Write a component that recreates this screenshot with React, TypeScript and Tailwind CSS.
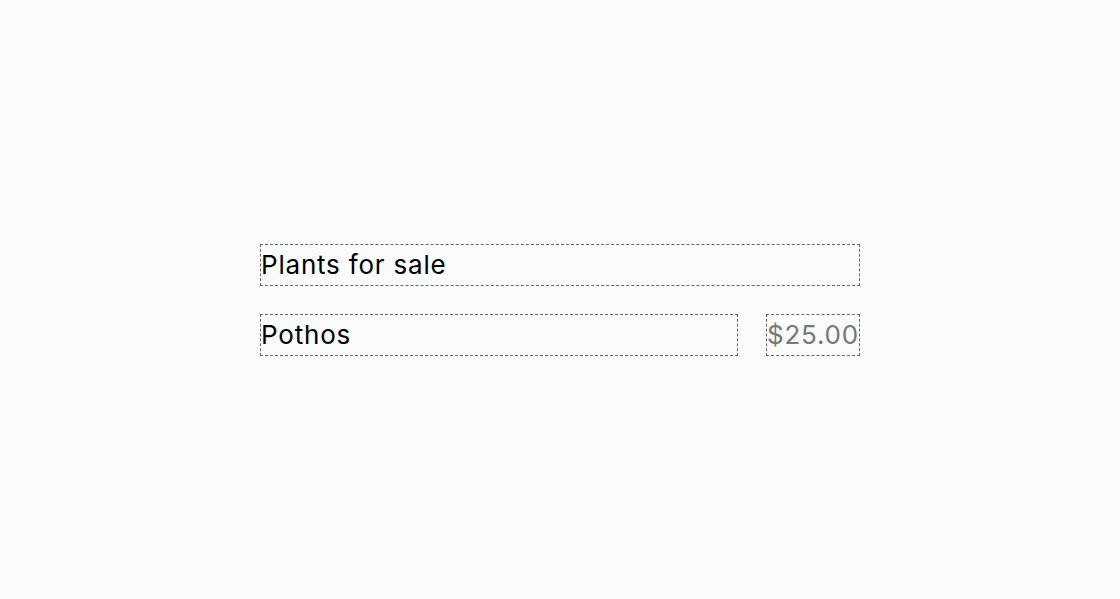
import React from 'react';

export default function App() {
  return (
    <div className="flex h-[599px] w-full items-center justify-center bg-[#f9fbfa] font-['Inter',sans-serif] tracking-[0.8px]">
      <div className="flex w-[600px] flex-col gap-[28px]">
        <div className="border border-dashed border-[#666] text-[26px] leading-[40px] text-black">
          Plants for sale
        </div>
        <div className="flex gap-[28px]">
          <div className="flex-1 border border-dashed border-[#666] text-[26px] leading-[40px] text-black">
            Pothos
          </div>
          <div className="border border-dashed border-[#666] text-[26px] leading-[40px] text-[#777]">
            $25.00
          </div>
        </div>
      </div>
    </div>
  );
}
